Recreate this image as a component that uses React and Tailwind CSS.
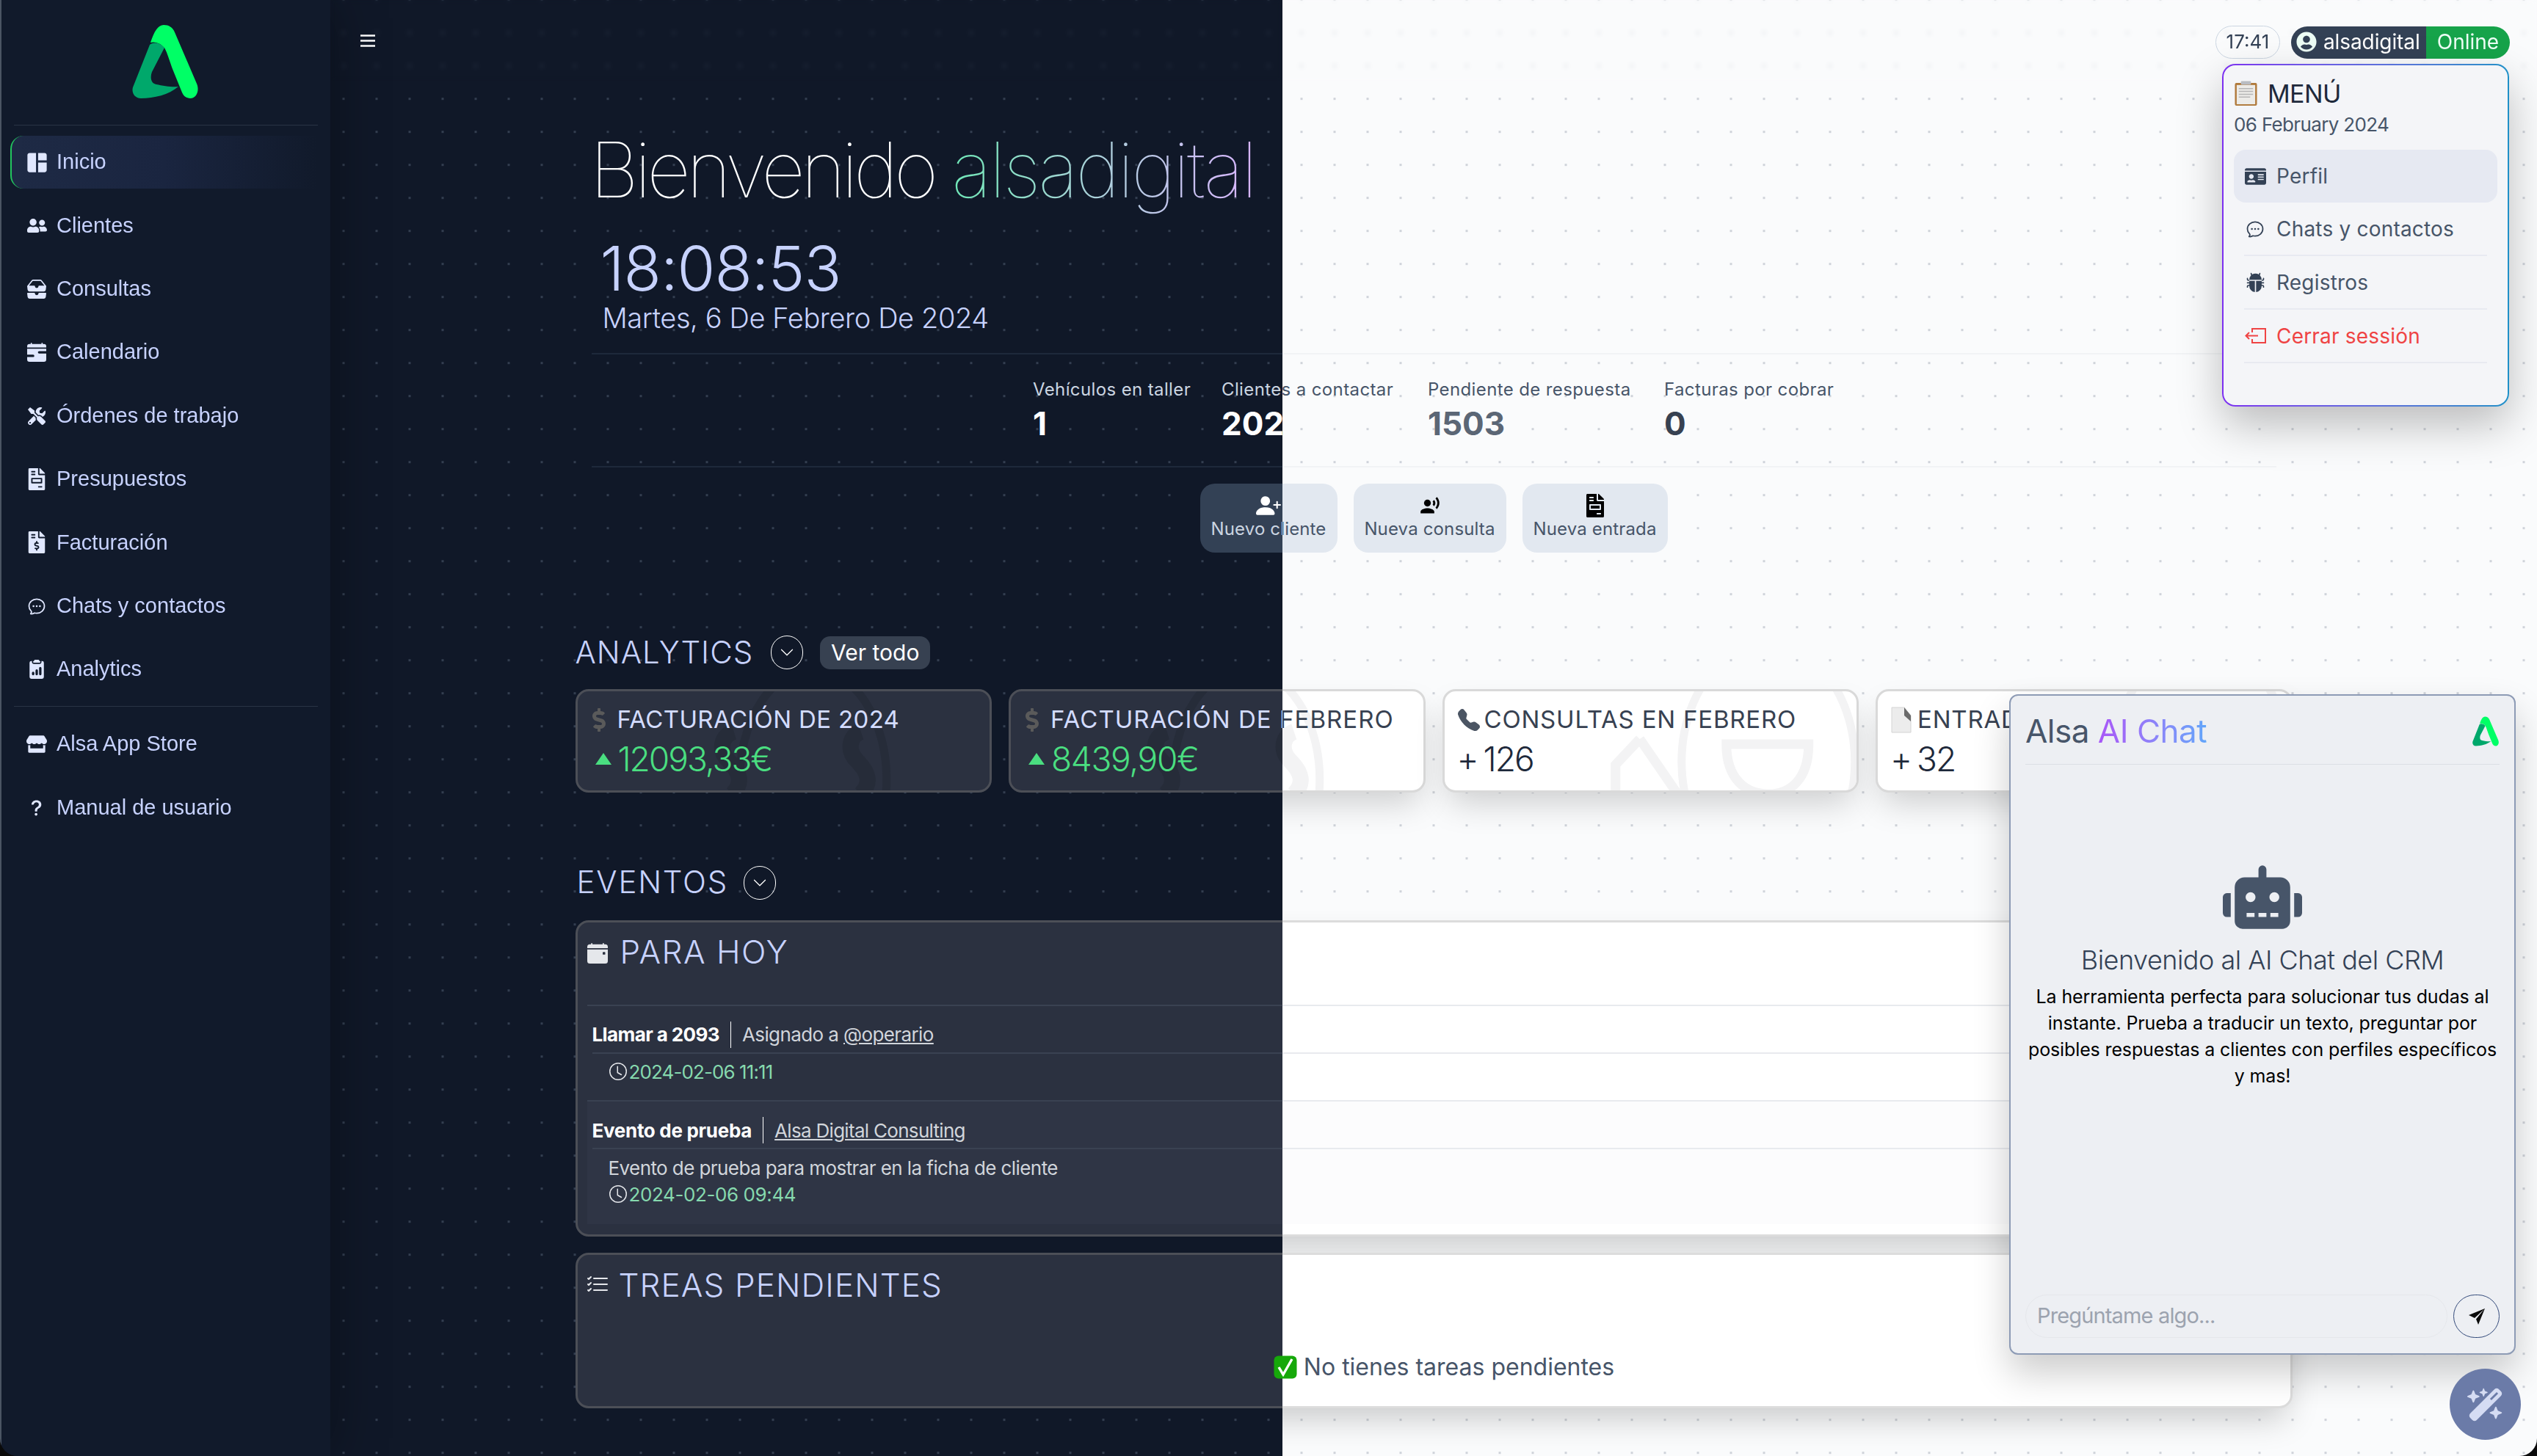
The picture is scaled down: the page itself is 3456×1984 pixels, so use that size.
import React from "react";
import { MdSpaceDashboard, MdRecordVoiceOver } from "react-icons/md";
import { FaUserFriends, FaTools, FaFileInvoice, FaFileInvoiceDollar, FaStore, FaIdCard, FaRobot, FaUserCircle, FaDollarSign } from "react-icons/fa";
import { FaWandMagicSparkles } from "react-icons/fa6";
import { BsInboxesFill, BsCalendarRangeFill, BsClipboard2DataFill, BsQuestionLg, BsBugFill, BsPersonPlusFill, BsCalendarEventFill, BsListCheck, BsClock, BsChevronDown, BsTelephoneFill } from "react-icons/bs";
import { HiOutlineChatBubbleOvalLeftEllipsis } from "react-icons/hi2";

const Logo = ({ className }) => (
  <svg viewBox="0 0 90 100" className={className}>
    <path fill="#00a86b" d="M24 27C27 24 36 22 44 31L27 64C24 72 26 80 33 81C42 83 55 85 63 84C50 95 30 100 12 100C3 100 -1 92 1 85Z" />
    <path fill="#00ff66" d="M25 24C30 9 35 0 43 0C50 0 55 3 58 10L88 80C92 89 88 100 79 100C74 100 70 97 68 92L55 60C52 52 48 38 44 31C39 25 31 22 25 24Z" />
  </svg>
);

const nav = [
  [MdSpaceDashboard, "Inicio", "w-[35px] h-[35px]"],
  [FaUserFriends, "Clientes", "w-[27px] h-[27px]"],
  [BsInboxesFill, "Consultas", "w-[26px] h-[26px]"],
  [BsCalendarRangeFill, "Calendario", "w-[26px] h-[26px]"],
  [FaTools, "Órdenes de trabajo", "w-[24px] h-[24px]"],
  [FaFileInvoice, "Presupuestos", "w-[24px] h-[30px]"],
  [FaFileInvoiceDollar, "Facturación", "w-[24px] h-[30px]"],
  [HiOutlineChatBubbleOvalLeftEllipsis, "Chats y contactos", "w-[28px] h-[28px]"],
  [BsClipboard2DataFill, "Analytics", "w-[26px] h-[28px]"],
];

const NavItem = ({ icon: Icon, label, size, active }) => (
  <div
    className={
      "h-[72px] flex items-center ml-[12px] mr-[18px] pl-[20px] rounded-l-[18px] border-l-2 " +
      (active
        ? "border-[#22c55e] bg-gradient-to-r from-[#1e2a45] via-[#1a2540] to-[#111a2b]"
        : "border-transparent")
    }
  >
    <span className="w-[28px] flex justify-center">
      <Icon className={size + " shrink-0 text-[#e0e7ff]"} />
    </span>
    <span className="ml-[13px] text-[29px] text-[#c7d2fe]">{label}</span>
  </div>
);

const Sidebar = () => (
  <aside className="relative z-20 w-[450px] h-[1984px] shrink-0 bg-[#111a2b] border-l-2 border-[#4b5563] shadow-[0_0_70px_rgba(0,0,0,0.35)] font-['Liberation_Sans',sans-serif]">
    <div className="h-[170px] pt-[34px] flex justify-center pr-[2px]">
      <Logo className="w-[90px] h-[100px]" />
    </div>
    <div className="mx-[17px] h-[1px] bg-[#2a3445]" />
    <nav className="mt-[14px] flex flex-col gap-[14.4px]">
      {nav.map(([Icon, label, size], i) => (
        <NavItem key={label} icon={Icon} label={label} size={size} active={i === 0} />
      ))}
    </nav>
    <div className="mx-[17px] mt-[14px] h-[1px] bg-[#2a3445]" />
    <div className="mt-[15px] flex flex-col gap-[14.4px]">
      <NavItem icon={FaStore} label="Alsa App Store" size="w-[28px] h-[26px]" />
      <NavItem icon={BsQuestionLg} label="Manual de usuario" size="w-[28px] h-[30px]" />
    </div>
  </aside>
);

const Chevron = ({ t }) => (
  <span className={"w-[44px] h-[46px] rounded-full border flex items-center justify-center " + t.chev}>
    <BsChevronDown className="w-[20px] h-[20px]" />
  </span>
);

const PageEmoji = () => (
  <svg viewBox="0 0 28 36" className="w-[28px] h-[36px]">
    <path fill="#ececec" stroke="#d4d4d4" d="M1 1H18L27 12V35H1Z" />
    <path fill="#6b6b6b" d="M18 1L27 12V20L18 12Z" />
  </svg>
);

const Card = ({ t, icon, title, value, up, dark, mark, titleTrack, valueTrack }) => (
  <div className={"relative h-[141px] rounded-[18px] border-[3px] overflow-hidden " + t.card}>
    <svg viewBox="0 0 560 135" className="absolute inset-0 w-full h-full" fill="none" stroke={dark ? "#262c39" : "#f3f3f4"} strokeWidth="11">
      {mark === "money" ? (
        <>
          <ellipse cx="320" cy="120" rx="100" ry="150" />
          <path d="M212 55C195 60 190 80 205 95C220 110 225 125 210 140" strokeWidth="22" />
          <path d="M385 55C370 60 365 80 380 95C395 110 400 125 385 140" strokeWidth="22" />
        </>
      ) : (
        <>
          <ellipse cx="440" cy="96" rx="118" ry="160" />
          <path d="M383 72H495C495 120 470 140 440 140C410 140 383 120 383 72Z" strokeWidth="13" />
          <path d="M265 65L232 100V145M265 65L320 145L290 170" strokeWidth="13" />
        </>
      )}
    </svg>
    <div className="relative pl-[18px] pr-[10px] pt-[16px]">
      <div className="flex items-center h-[46px] whitespace-nowrap">
        <span className="w-[36px] flex justify-start">{icon}</span>
        <span className={"text-[33px] font-normal " + titleTrack + " " + t.cardTitle}>{title}</span>
      </div>
      <div className="flex items-center h-[60px] whitespace-nowrap">
        {up ? (
          <svg viewBox="0 0 22 16" className="w-[22px] h-[16px] ml-[6px] mr-[9px]"><path fill="#4ade80" d="M11 0L22 16H0Z" /></svg>
        ) : (
          <span className={"text-[46px] font-light -ml-[1px] mr-[6px] leading-none " + t.cardVal}>+</span>
        )}
        <span className={"text-[46px] font-light " + valueTrack + " " + (up ? "text-[#4ade80]" : t.cardVal)}>{value}</span>
      </div>
    </div>
  </div>
);

const Stat = ({ t, w, label, value, cls }) => (
  <div className={w}>
    <div className={"text-[24px] leading-[30px] whitespace-nowrap tracking-[0.38px] " + t.statLabel}>{label}</div>
    <div className={"mt-[6px] text-[44px] leading-[50px] font-bold " + cls}>{value}</div>
  </div>
);

const Action = ({ t, icon, label, w }) => (
  <div className={"h-[94px] rounded-[20px] flex flex-col items-center pt-[10px] " + w + " " + t.action}>
    <span className={"h-[40px] flex items-center " + t.actionIcon}>{icon}</span>
    <span className="text-[24px] leading-[30px] -mt-[3px] whitespace-nowrap tracking-[0.15px]">{label}</span>
  </div>
);

const Main = ({ dark }) => {
  const t = dark
    ? {
        bg: "bg-[#101828] bg-[radial-gradient(circle,#333e50_1.6px,transparent_2px)]",
        burger: "#ffffff",
        hr: "border-[#1e293b]",
        statLabel: "text-[#cbd5e1]",
        action: "bg-[#334155] text-[#cbd5e1]",
        actionIcon: "text-white",
        head: "text-[#c7d2fe]",
        chev: "border-white text-white",
        card: "bg-[#2b3140] border-[#4c4f57]",
        cardTitle: "text-[#d3dcff]",
        cardVal: "text-white",
        eventTitle: "text-[#c7d2fe]",
        iconEv: "text-[#e5e7eb]",
        line: "border-[#3a4252]",
        row2: "bg-[#2f3545]",
        strong: "text-white",
        sep: "bg-white",
        soft: "text-[#d1d5db]",
        empty: "text-[#cbd5e1]",
        eventCard: "bg-[#2b3140] border-[#4c4f57]",
        date: "text-[#86d9ae]",
        clock: "text-[#e5e7eb]",
        v1: "text-white",
        v2: "text-white",
      }
    : {
        bg: "bg-[#fafbfc] bg-[radial-gradient(circle,#cfd3da_1.6px,transparent_2px)]",
        burger: "#1f2937",
        hr: "border-[#f1f3f5]",
        statLabel: "text-[#475569]",
        action: "bg-[#e2e8f0] text-[#475569]",
        actionIcon: "text-black",
        head: "text-[#334155]",
        chev: "border-[#334155] text-[#334155]",
        card: "bg-white border-[#d9d9d9] shadow-[0_22px_45px_-8px_rgba(0,0,0,0.18)]",
        cardTitle: "text-[#374151]",
        cardVal: "text-[#1e293b]",
        eventTitle: "text-[#334155]",
        iconEv: "text-[#374151]",
        line: "border-[#e8eaee]",
        row2: "bg-[#fcfcfd]",
        strong: "text-[#111827]",
        sep: "bg-[#374151]",
        soft: "text-[#4b5563]",
        empty: "text-[#475569]",
        eventCard: "bg-white border-[#dcdcdc] shadow-[0_22px_45px_-8px_rgba(0,0,0,0.2)]",
        date: "text-[#059669]",
        clock: "text-[#374151]",
        v1: "text-[#374151]",
        v2: "text-[#5b6675]",
      };

  const moneyIcon = <FaDollarSign className="w-[22px] h-[32px] text-[#5a5a5a]" />;

  return (
    <div className={"w-[3006px] h-[1984px] bg-size-[45px_45px] bg-position-[-4.5px_22.2px] font-['Inter',sans-serif] " + t.bg}>
      <header className="h-[110px] flex items-start justify-between pl-[41px] pr-[37px] pt-[35px] backdrop-blur-[3px]">
        <svg viewBox="0 0 20 17" className="w-[20px] h-[17px] mt-[12px]">
          <path stroke={t.burger} strokeWidth="2.4" d="M0 1.5H20M0 8.5H20M0 15.5H20" />
        </svg>
        <div className="flex items-center gap-[15px]">
          <span className="w-[88px] h-[45px] pb-[2px] rounded-full border border-[#cbd5e1] flex items-center justify-center text-[26px] text-[#334155]">17:41</span>
          <div className="w-[298px] h-[44px] rounded-full overflow-hidden flex text-[28px]">
            <div className="w-[184px] bg-[#334155] text-white flex items-center pl-[7px] gap-[9px] pb-[1px]">
              <FaUserCircle className="w-[28px] h-[28px] text-[#ecfdf5]" />
              <span className="tracking-[-0.1px]">alsadigital</span>
            </div>
            <div className="flex-1 bg-[#16a34a] text-[#ecfdf5] flex items-center justify-center pb-[1px]">Online</div>
          </div>
        </div>
      </header>

      <div className="mx-auto w-[2339px]">
        {/* hero */}
        <div className="pl-[20px]">
          <h1 className="mt-[61px] h-[120px] text-[104px] leading-[120px] font-thin tracking-[-5.6px] whitespace-nowrap text-white">
            Bienvenido{" "}
            <span className="tracking-[-3.5px] bg-gradient-to-r from-[#6ee7b7] to-[#d8b4fe] bg-clip-text text-transparent">alsadigital</span>
          </h1>
          <div className="mt-[30px] ml-[14px] h-[90px] text-[84px] leading-[90px] font-light tracking-[-1px] text-[#c7d2fe]">18:08:53</div>
          <div className="ml-[17px] h-[44px] text-[38px] leading-[44px] font-light tracking-[-0.4px] text-[#c7d2fe]">Martes, 6 De Febrero De 2024</div>
        </div>
        <div className={"mt-[26px] mx-[22px] border-t-2 " + t.hr} />
        <div className={"mx-[22px] h-[154px] pt-[33px] flex justify-center gap-[46px] border-b-2 " + t.hr}>
          <Stat t={t} w="w-[211px]" label="Vehículos en taller" value="1" cls={t.v1} />
          <Stat t={t} w="w-[235px]" label="Clientes a contactar" value="202" cls={t.v1} />
          <Stat t={t} w="w-[276px]" label="Pendiente de respuesta" value="1503" cls={t.v2} />
          <Stat t={t} w="w-[232px]" label="Facturas por cobrar" value="0" cls={t.v1} />
        </div>
        <div className="mt-[22px] flex justify-center gap-[22px]">
          <Action t={t} w="w-[187px]" label="Nuevo cliente" icon={<BsPersonPlusFill className="w-[34px] h-[34px]" />} />
          <Action t={t} w="w-[208px]" label="Nueva consulta" icon={<MdRecordVoiceOver className="w-[28px] h-[28px]" />} />
          <Action t={t} w="w-[198px]" label="Nueva entrada" icon={<FaFileInvoice className="w-[24px] h-[32px]" />} />
        </div>

        {/* analytics */}
        <div className="mt-[113px] h-[46px] flex items-center">
          <span className={"text-[42px] font-light tracking-[1px] pb-[1px] " + t.head}>ANALYTICS</span>
          <span className="ml-[24px]"><Chevron t={t} /></span>
          <span className="ml-[23px] w-[150px] h-[45px] rounded-[14px] bg-[#374151] text-white flex items-center justify-center text-[30px]">Ver todo</span>
        </div>
        <div className="mt-[27px] grid grid-cols-4 gap-[23px]">
          <Card t={t} dark={dark} mark="money" up icon={moneyIcon} titleTrack="tracking-[0.35px]" valueTrack="tracking-[-2px]" title="FACTURACIÓN DE 2024" value="12093,33€" />
          <Card t={t} dark={dark} mark="money" up icon={moneyIcon} titleTrack="tracking-[1.05px]" valueTrack="tracking-[-1.3px]" title="FACTURACIÓN DE FEBRERO" value="8439,90€" />
          <Card t={t} dark={dark} mark="phone" icon={<BsTelephoneFill className="w-[30px] h-[30px] text-[#4b5563]" />} titleTrack="tracking-[0.8px]" valueTrack="tracking-[-2px]" title="CONSULTAS EN FEBRERO" value="126" />
          <Card t={t} dark={dark} mark="phone" icon={<PageEmoji />} titleTrack="tracking-[0.8px]" valueTrack="tracking-[-2px]" title="ENTRADAS EN FEBRERO" value="32" />
        </div>

        {/* eventos */}
        <div className="mt-[100px] h-[46px] pl-[2px] flex items-center">
          <span className={"text-[42px] font-light tracking-[1.8px] pb-[3px] " + t.head}>EVENTOS</span>
          <span className="ml-[21px]"><Chevron t={t} /></span>
        </div>
        <div className={"mt-[28px] h-[431px] rounded-[18px] border-[3px] pl-[13px] pr-[13px] " + t.eventCard}>
          <div className={"h-[114px] border-b-2 flex items-start pt-[18px] " + t.line}>
            <BsCalendarEventFill className={"w-[28px] h-[32px] mt-[8px] " + t.iconEv} />
            <span className={"ml-[17px] text-[44px] leading-[44px] font-light tracking-[1.5px] " + t.eventTitle}>PARA HOY</span>
          </div>
          <div className={"h-[130px] border-b-2 " + t.line}>
            <div className={"h-[65px] ml-[7px] pt-[14px] border-b-2 flex items-center text-[26px] " + t.line}>
              <strong className={"font-bold tracking-[-0.6px] " + t.strong}>Llamar a 2093</strong>
              <span className={"mx-[15px] w-[1px] h-[36px] " + t.sep} />
              <span className={"tracking-[-0.6px] " + t.soft}>Asignado a <span className="underline">@operario</span></span>
            </div>
            <div className="ml-[30px] mt-[9px] flex items-center h-[30px] text-[26px]">
              <BsClock className={"w-[24px] h-[24px] mr-[3px] " + t.clock} />
              <span className={"tracking-[-0.9px] " + t.date}>2024-02-06 11:11</span>
            </div>
          </div>
          <div className={"h-[167px] " + t.row2}>
            <div className={"h-[65px] ml-[7px] pt-[15px] border-b-2 flex items-center text-[26px] " + t.line}>
              <strong className={"font-bold tracking-[-0.3px] " + t.strong}>Evento de prueba</strong>
              <span className={"mx-[15px] w-[1px] h-[36px] " + t.sep} />
              <span className={"underline tracking-[-0.7px] " + t.soft}>Alsa Digital Consulting</span>
            </div>
            <div className={"ml-[29px] mt-[11px] h-[30px] leading-[30px] text-[26px] tracking-[-0.58px] " + t.soft}>Evento de prueba para mostrar en la ficha de cliente</div>
            <div className="ml-[30px] mt-[5px] flex items-center h-[30px] text-[26px]">
              <BsClock className={"w-[24px] h-[24px] mr-[3px] " + t.clock} />
              <span className={"tracking-[-0.4px] " + t.date}>2024-02-06 09:44</span>
            </div>
          </div>
        </div>
        <div className={"mt-[22px] h-[212px] rounded-[18px] border-[3px] pl-[13px] " + t.eventCard}>
          <div className="flex items-center h-[44px] mt-[19px]">
            <BsListCheck className={"w-[32px] h-[32px] -ml-[2px] " + t.iconEv} />
            <span className={"ml-[13px] text-[44px] leading-[44px] font-light tracking-[1.1px] " + t.eventTitle}>TREAS PENDIENTES</span>
          </div>
          <div className="mt-[66px] mr-[13px] pl-[28px] flex items-center justify-center">
            <svg viewBox="0 0 32 32" className="w-[32px] h-[32px] shrink-0">
              <rect x="0.5" y="0.5" width="31" height="31" rx="6" fill="#16a80a" />
              <path fill="none" stroke="#fff" strokeWidth="3.4" d="M7 16L13 26L25 5" />
            </svg>
            <span className={"ml-[9px] text-[32px] tracking-[0px] " + t.empty}>No tienes tareas pendientes</span>
          </div>
        </div>
      </div>
    </div>
  );
};

const MenuRow = ({ icon, label, active, danger }) => (
  <div className={active ? "h-[72px] rounded-[16px] bg-[#e6e9f2] px-[14px] flex items-center" : "mx-[14px] h-[73px] border-b-2 border-[#e8eaf1] flex items-center"}>
    <span className="w-[30px] flex justify-center">{icon}</span>
    <span className={"ml-[14px] text-[28px] tracking-[0.2px] " + (danger ? "text-[#ef4444]" : "text-[#475569]")}>{label}</span>
  </div>
);

const Menu = () => (
  <div className="absolute z-30 left-[3027px] top-[87px] w-[391px] h-[467px] p-[2px] rounded-[18px] bg-gradient-to-r from-[#7c2ff0] to-[#1e90c8] shadow-[0_25px_60px_rgba(0,0,0,0.25)] font-['Inter',sans-serif]">
    <div className="w-full h-full rounded-[16px] bg-[#f4f5f8] px-[14px] pt-[16px]">
      <div className="flex items-center h-[44px] pl-[1px]">
        <svg viewBox="0 0 32 36" className="w-[31px] h-[35px]">
          <rect x="0.5" y="3" width="31" height="32" rx="2" fill="#b07a3c" />
          <rect x="3" y="6" width="26" height="27" fill="#ecebe8" />
          <rect x="9" y="0.5" width="14" height="5" rx="1" fill="#b9bcc2" />
          <path stroke="#b5b5b5" strokeWidth="1.5" d="M6 11H26M6 15H26M6 19H26M6 23H22" />
        </svg>
        <span className="ml-[14px] text-[34px] text-[#1e293b] tracking-[-0.6px]">MENÚ</span>
      </div>
      <div className="mt-[5px] h-[32px] leading-[32px] text-[26px] tracking-[-0.65px] text-[#475569]">06 February 2024</div>
      <div className="mt-[18px]">
        <MenuRow active label="Perfil" icon={<FaIdCard className="w-[29px] h-[29px] text-[#334155]" />} />
        <MenuRow label="Chats y contactos" icon={<HiOutlineChatBubbleOvalLeftEllipsis className="w-[28px] h-[28px] text-[#334155]" />} />
        <MenuRow label="Registros" icon={<BsBugFill className="w-[27px] h-[27px] text-[#334155]" />} />
        <MenuRow danger label="Cerrar sessión" icon={
          <svg viewBox="0 0 29 21" className="w-[29px] h-[21px]" fill="none" stroke="#ef4444" strokeWidth="2">
            <path d="M10 6V1H28V20H10V15M18 10.5H2M6 6L1.5 10.5L6 15" />
          </svg>
        } />
      </div>
    </div>
  </div>
);

const Chat = () => (
  <div className="absolute z-30 left-[2737px] top-[946px] w-[690px] h-[900px] rounded-[12px] border-2 border-[#8d9bb5] bg-[#edeff3] px-[20px] shadow-[0_25px_50px_rgba(0,0,0,0.2)] font-['Inter',sans-serif] flex flex-col">
    <div className="h-[94px] pt-[3px] border-b border-[#dcdfe5] flex items-center justify-between">
      <span className="text-[44px] tracking-[-0.5px] text-[#475569]">
        Alsa <span className="bg-gradient-to-r from-[#a855f7] to-[#60a5fa] bg-clip-text text-transparent">AI Chat</span>
      </span>
      <Logo className="w-[36px] h-[41px] mr-[1px]" />
    </div>
    <div className="flex flex-col items-center pt-[137px] flex-1">
      <FaRobot className="w-[108px] h-[87px] text-[#475569]" />
      <div className="mt-[22px] h-[40px] leading-[40px] text-[36px] font-light tracking-[-0.5px] text-[#334155]">Bienvenido al AI Chat del CRM</div>
      <p className="mt-[12px] text-center text-[25px] leading-[36px] tracking-[-0.13px] text-black whitespace-nowrap">
        La herramienta perfecta para solucionar tus dudas al<br />
        instante. Prueba a traducir un texto, preguntar por<br />
        posibles respuestas a clientes con perfiles específicos<br />
        y mas!
      </p>
    </div>
    <div className="flex items-center gap-[8px] mb-[21px]">
      <div className="w-[575px] h-[59px] rounded-full border border-[#e5e7eb] flex items-center pl-[15px] pb-[1px] text-[29px] tracking-[-0.85px] text-[#9ca3af]">Pregúntame algo...</div>
      <div className="w-[63px] h-[59px] rounded-full border border-[#334a7a] flex items-center justify-center">
        <svg viewBox="0 0 24 24" className="w-[24px] h-[24px]"><path fill="#0b0b0b" d="M23 1L1 10L9 14L22 2L11 15.5L14 23Z" /></svg>
      </div>
    </div>
  </div>
);

export default function App() {
  return (
    <div className="w-[3456px] h-[1984px] overflow-hidden bg-[#0a0a0a]">
      <div className="relative w-[3456px] h-[1984px] overflow-hidden rounded-b-[24px] flex bg-[#101828]">
        <Sidebar />
        <div className="relative w-[3006px] h-[1984px]">
          <Main dark={false} />
          <div className="absolute left-0 top-0 w-[1297px] h-[1984px] overflow-hidden">
            <Main dark />
          </div>
        </div>
        <Menu />
        <Chat />
        <div className="absolute z-30 left-[3337px] top-[1865px] w-[97px] h-[97px] rounded-full bg-[#6b7ba8] flex items-center justify-center">
          <FaWandMagicSparkles className="w-[50px] h-[50px] text-[#d5dcf3]" />
        </div>
      </div>
    </div>
  );
}
